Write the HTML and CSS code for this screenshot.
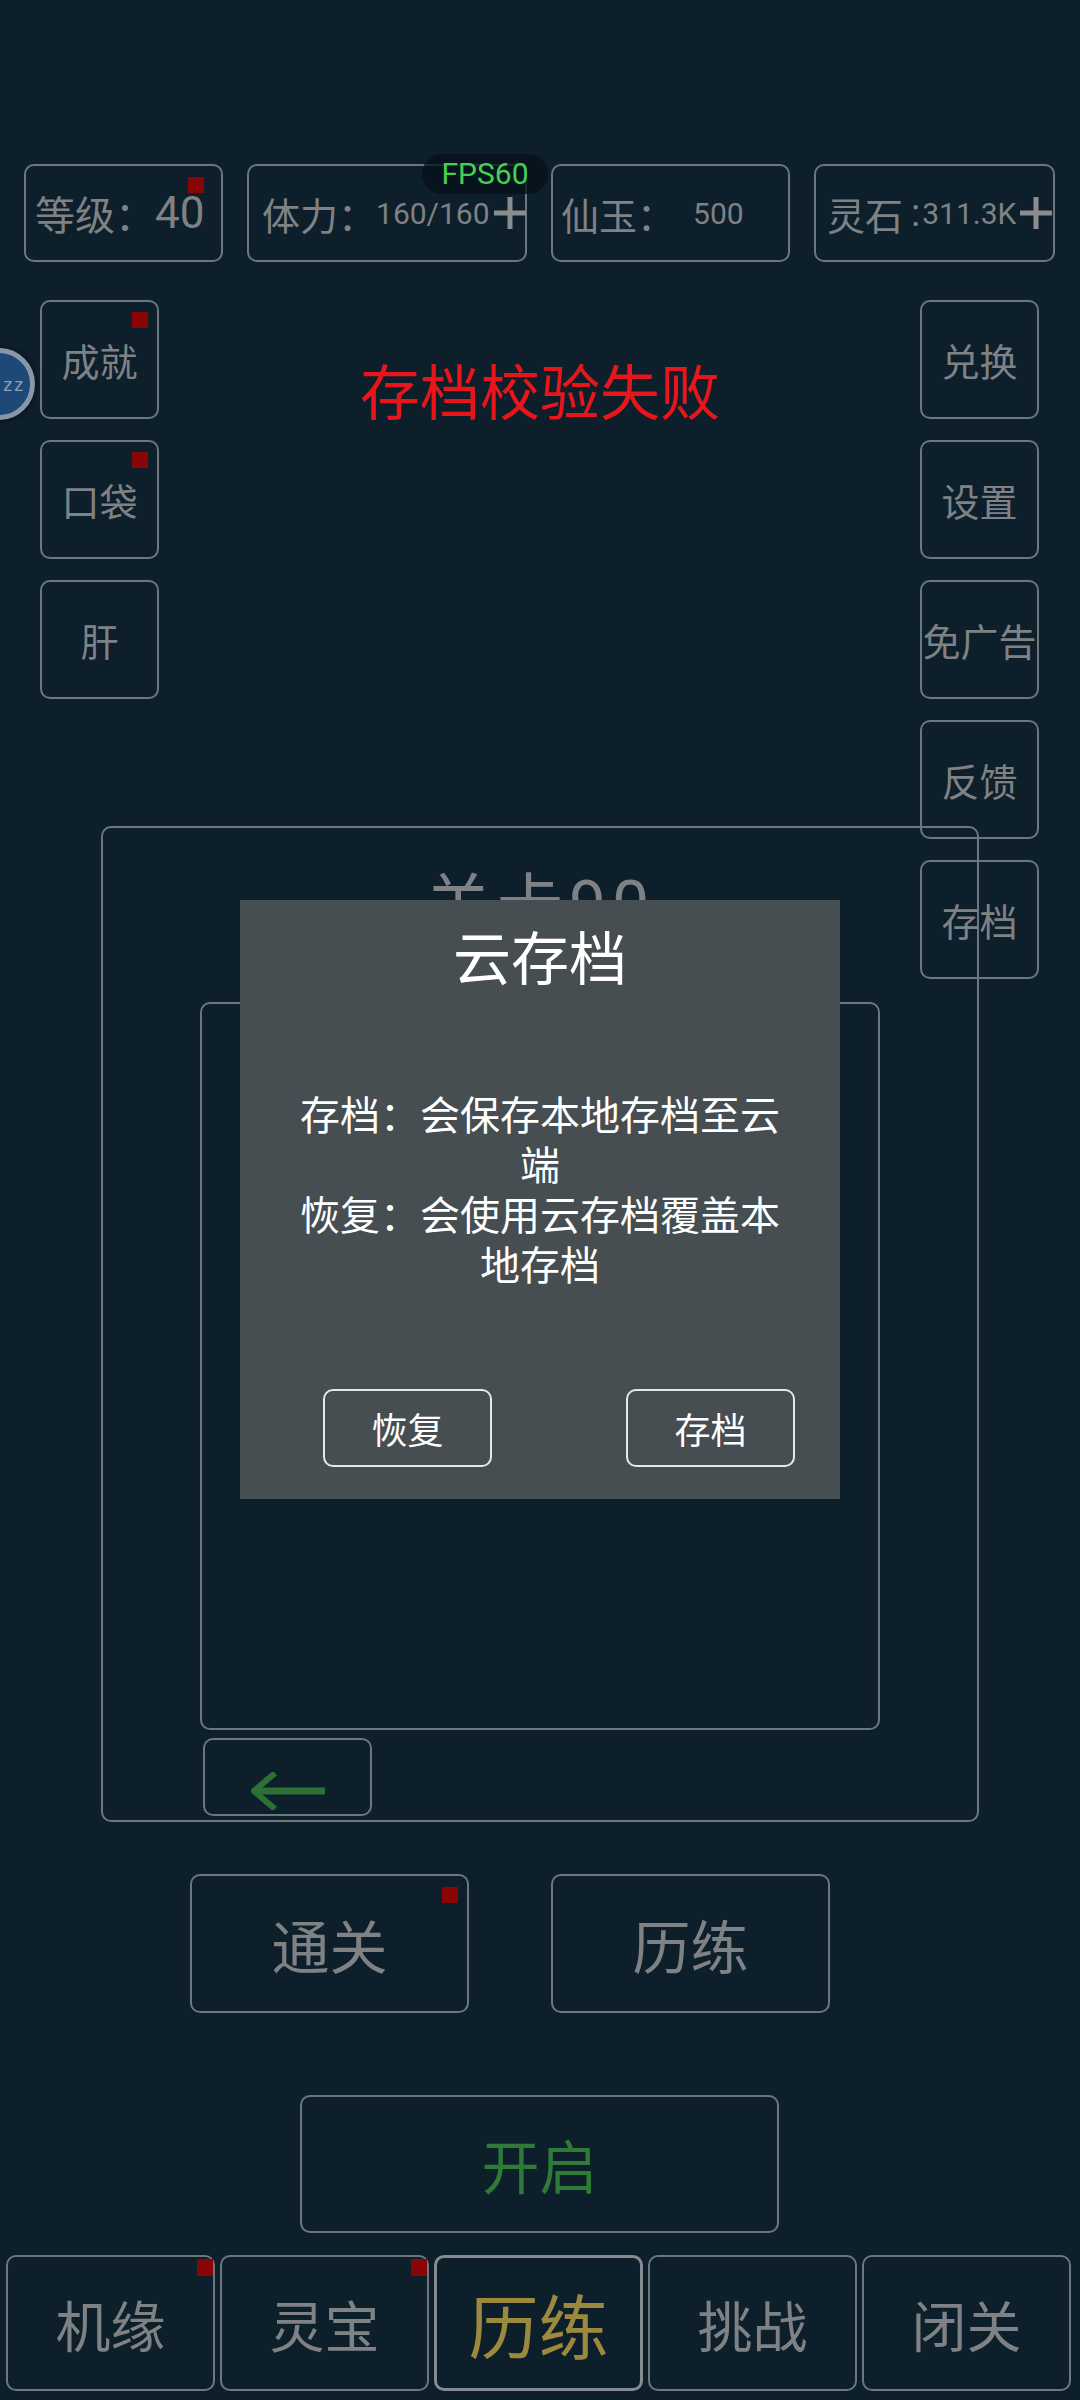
FILE: index.html
```html
<!DOCTYPE html>
<html lang="zh-CN">
<head>
    <meta charset="UTF-8">
    <meta name="viewport" content="width=device-width, initial-scale=1.0">
    <title>云存档</title>
    <link rel="stylesheet" href="styles.css">
</head>
<body>
    <div class="screen">
        <!-- Top stats -->
        <div class="stats">
            <div class="stat stat-level">
                <span class="label">等级：</span><span class="num num-big">40</span>
                <i class="dot"></i>
            </div>
            <div class="stat stat-stamina">
                <span class="label">体力：</span><span class="num">160/160</span>
                <svg class="plus" viewBox="0 0 34 34"><path d="M17 1V33M1 17H33"/></svg>
            </div>
            <div class="stat stat-jade">
                <span class="label">仙玉：</span><span class="num num-gap">500</span>
            </div>
            <div class="stat stat-stone">
                <span class="label">灵石</span><span class="colon">:</span><span class="num">311.3K</span>
                <svg class="plus" viewBox="0 0 34 34"><path d="M17 1V33M1 17H33"/></svg>
            </div>
        </div>

        <div class="field">
            <div class="side side-left">
                <div class="btn side-btn">成就<i class="dot"></i></div>
                <div class="btn side-btn">口袋<i class="dot"></i></div>
                <div class="btn side-btn">肝</div>
            </div>

            <div class="side side-right">
                <div class="btn side-btn">兑换</div>
                <div class="btn side-btn">设置</div>
                <div class="btn side-btn">免广告</div>
                <div class="btn side-btn">反馈</div>
                <div class="btn side-btn">存档</div>
            </div>

            <div class="alert">存档校验失败</div>

            <div class="stage">
                <div class="stage-title">关卡90</div>
                <div class="stage-inner"></div>
                <div class="btn back-btn">
                    <svg viewBox="0 0 74 38"><path class="arrow-head" d="M24 1L3 19L24 37"/><path class="arrow-line" d="M6 19H74"/></svg>
                </div>
            </div>
        </div>

        <div class="actions">
            <div class="btn action-btn">通关<i class="dot"></i></div>
            <div class="btn action-btn">历练</div>
        </div>

        <div class="btn start-btn">开启</div>

        <!-- Bottom tabs -->
        <div class="tabs">
            <div class="btn tab">机缘<i class="dot"></i></div>
            <div class="btn tab">灵宝<i class="dot"></i></div>
            <div class="btn tab tab-active">历练</div>
            <div class="btn tab">挑战</div>
            <div class="btn tab">闭关</div>
        </div>

        <!-- Overlays -->
        <div class="fps">FPS60</div>
        <div class="avatar"><span>zz</span></div>

        <div class="modal">
            <div class="modal-title">云存档</div>
            <div class="modal-text">
                存档：会保存本地存档至云端<br>
                恢复：会使用云存档覆盖本地存档
            </div>
            <div class="modal-actions">
                <div class="modal-btn">恢复</div>
                <div class="modal-btn">存档</div>
            </div>
        </div>
    </div>
</body>
</html>
```

FILE: styles.css
```css
* {
    margin: 0;
    padding: 0;
    box-sizing: border-box;
}

body {
    font-family: Roboto, "Noto Sans CJK SC", sans-serif;
    background-color: #0e1f2c;
    color: #7f8284;
    width: 1080px;
    height: 2400px;
    overflow: hidden;
}

.screen {
    position: relative;
    width: 1080px;
    height: 2400px;
    overflow: hidden;
}

.btn {
    position: relative;
    display: flex;
    align-items: center;
    justify-content: center;
    border: 2px solid #6c767f;
    border-radius: 10px;
    color: #7f8284;
    white-space: nowrap;
}

.dot {
    position: absolute;
    width: 16px;
    height: 16px;
    background-color: #8a0508;
}

/* Top stats */
.stats {
    display: flex;
    gap: 24px;
    padding: 164px 0 0 24px;
}

.stat {
    position: relative;
    display: flex;
    align-items: center;
    height: 98px;
    border: 2px solid #6c767f;
    border-radius: 10px;
    font-size: 38px;
    white-space: nowrap;
}

.stat-level {
    width: 199px;
    padding-left: 9px;
    font-size: 40px;
}

.stat-level .dot {
    top: 11px;
    right: 17px;
}

.stat-stamina {
    width: 280px;
    padding-left: 13px;
}

.stat-jade {
    width: 239px;
    padding-left: 8px;
}

.stat-stone {
    width: 241px;
    padding-left: 11px;
}

.num {
    font-size: 30px;
}

.num-big {
    font-size: 44px;
}

.num-gap {
    margin-left: 18px;
}

.colon {
    margin: 0 2px 0 8px;
}

.plus {
    width: 34px;
    height: 34px;
    margin-left: 3px;
    flex-shrink: 0;
}

.plus path {
    stroke: #8a8c8e;
    stroke-width: 5;
    fill: none;
}

/* Middle field: columns, alert and stage share one cell */
.field {
    display: grid;
    height: 1612px;
}

.field > * {
    grid-area: 1 / 1;
    align-self: start;
}

.side {
    display: flex;
    flex-direction: column;
    gap: 21px;
    margin-top: 38px;
}

.side-left {
    justify-self: start;
    margin-left: 40px;
}

.side-right {
    justify-self: end;
    margin-right: 41px;
}

.side-btn {
    width: 119px;
    height: 119px;
    font-size: 38px;
}

.side-btn .dot {
    top: 10px;
    right: 9px;
}

.alert {
    justify-self: center;
    margin-top: 103px;
    font-size: 60px;
    line-height: 1;
    color: #e8151b;
}

.stage {
    justify-self: start;
    margin: 564px 0 0 101px;
    width: 878px;
    height: 996px;
    border: 2px solid #6c767f;
    border-radius: 10px;
    padding: 46px 0 0 97px;
}

.stage-title {
    width: 680px;
    text-align: center;
    font-size: 66px;
    line-height: 64px;
    letter-spacing: 6px;
}

.stage-inner {
    width: 680px;
    height: 728px;
    margin-top: 64px;
    border: 2px solid #6c767f;
    border-radius: 10px;
}

.back-btn {
    width: 169px;
    height: 78px;
    margin: 8px 0 0 3px;
    padding-top: 28px;
}

.back-btn svg {
    width: 74px;
    height: 38px;
}

.arrow-head {
    fill: none;
    stroke: #2c7035;
    stroke-width: 6;
}

.arrow-line {
    stroke: #2c7035;
    stroke-width: 7;
}

/* Action buttons */
.actions {
    display: flex;
    gap: 82px;
    padding-left: 190px;
}

.action-btn {
    width: 279px;
    height: 139px;
    font-size: 58px;
}

.action-btn .dot {
    top: 11px;
    right: 9px;
}

.start-btn {
    width: 479px;
    height: 138px;
    margin: 82px 0 0 300px;
    font-size: 58px;
    color: #2e7a37;
}

/* Bottom tabs */
.tabs {
    display: flex;
    gap: 5px;
    margin-top: 22px;
    padding-left: 6px;
}

.tab {
    width: 209px;
    height: 136px;
    font-size: 55px;
}

.tab .dot {
    top: 2px;
    right: 0;
    height: 17px;
}

.tab-active {
    border: 3px solid #868b90;
    font-size: 70px;
    color: #9b8a3e;
}

/* Overlays */
.fps {
    position: absolute;
    left: 422px;
    top: 154px;
    width: 126px;
    height: 40px;
    border-radius: 20px;
    background-color: rgba(6, 16, 24, 0.75);
    color: #44d052;
    font-size: 30px;
    line-height: 40px;
    text-align: center;
}

.avatar {
    position: absolute;
    left: -37px;
    top: 348px;
    width: 72px;
    height: 72px;
    border-radius: 50%;
    border: 5px solid #8797a8;
    background-color: #1d4877;
    box-shadow: 0 0 8px rgba(0, 0, 0, 0.6);
    display: flex;
    align-items: center;
    justify-content: flex-end;
    padding-right: 6px;
}

.avatar span {
    font-size: 18px;
    font-family: "DejaVu Sans Mono", monospace;
    color: #8ea0b4;
}

.modal {
    position: absolute;
    left: 240px;
    top: 900px;
    width: 600px;
    height: 599px;
    background-color: #464e51;
    color: #fff;
    padding-top: 30px;
}

.modal-title {
    text-align: center;
    font-size: 58px;
    line-height: 60px;
}

.modal-text {
    width: 500px;
    margin: 102px auto 0;
    text-align: center;
    font-size: 40px;
    line-height: 50px;
}

.modal-actions {
    display: flex;
    gap: 134px;
    margin: 97px 0 0 83px;
}

.modal-btn {
    width: 169px;
    height: 78px;
    border: 2px solid #e8e8e8;
    border-radius: 10px;
    display: flex;
    align-items: center;
    justify-content: center;
    font-size: 36px;
}
```
